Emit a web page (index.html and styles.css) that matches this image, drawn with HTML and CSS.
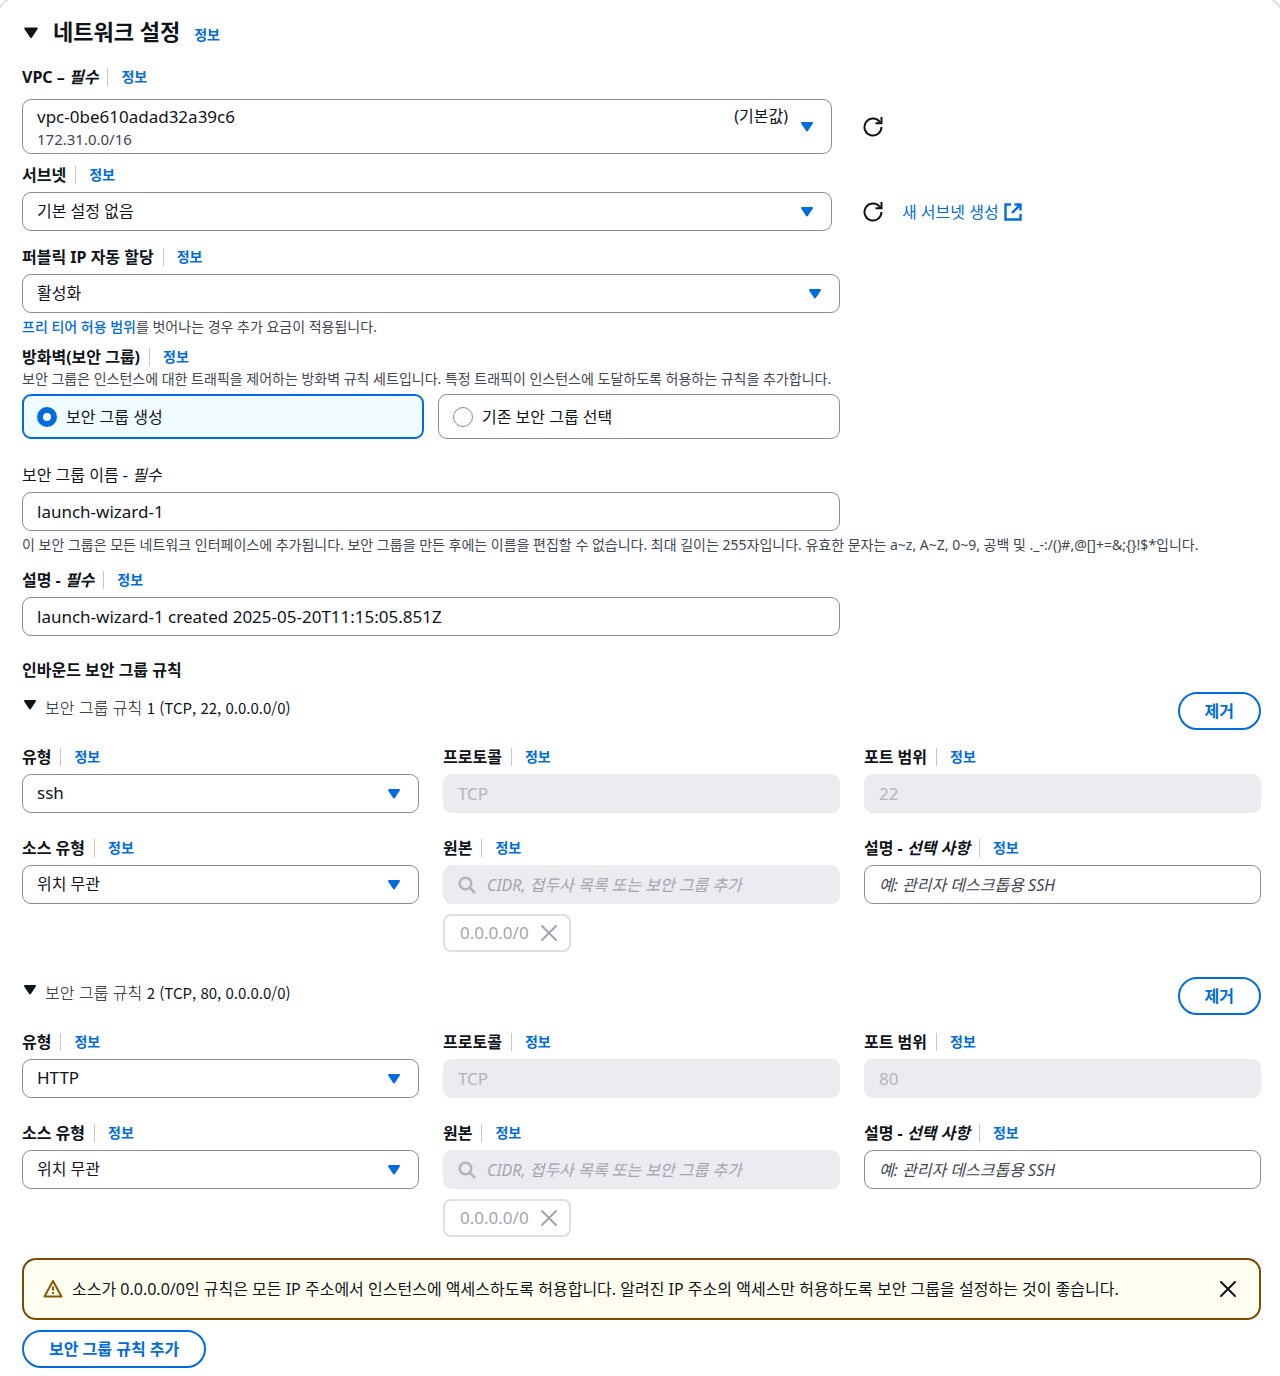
FILE: index.html
```html
<!DOCTYPE html>
<html lang="ko">
  <head>
    <meta charset="UTF-8" />
    <meta name="viewport" content="width=device-width, initial-scale=1.0" />
    <title>네트워크 설정</title>
    <link rel="stylesheet" href="styles.css">
  </head>
  <body>
    <!-- Shared icons -->
    <svg class="icon-defs" width="0" height="0" aria-hidden="true">
      <symbol id="caret" viewBox="0 0 16 16">
        <path d="M3 4h10L8 11.500z" fill="currentColor" stroke="currentColor" stroke-width="2" stroke-linejoin="round" />
      </symbol>
      <symbol id="refresh" viewBox="0 0 20 20">
        <path d="M18.500 10a8.500 8.500 0 1 1-2.200-5.700L17.800 6" fill="none" stroke="currentColor" stroke-width="2" />
        <path d="M18.500 0V6.200H12.500" fill="none" stroke="currentColor" stroke-width="2" />
      </symbol>
      <symbol id="external" viewBox="0 0 18 18">
        <path d="M7 1.500H1.500v15h15V11M10.500 1.500h6v6M16.500 1.500L8 10" fill="none" stroke="currentColor" stroke-width="2.400" />
      </symbol>
      <symbol id="search" viewBox="0 0 18 18">
        <circle cx="7.500" cy="7.500" r="5.800" fill="none" stroke="currentColor" stroke-width="2.500" />
        <path d="M11.500 11.500l5.500 5.500" fill="none" stroke="currentColor" stroke-width="2.500" />
      </symbol>
      <symbol id="close" viewBox="0 0 16 16">
        <path d="M1 1l14 14M15 1L1 15" fill="none" stroke="currentColor" stroke-width="2" stroke-linecap="round" />
      </symbol>
      <symbol id="warning" viewBox="0 0 20 20">
        <path d="M10 2L18.500 17.500H1.500z" fill="none" stroke="currentColor" stroke-width="2" stroke-linejoin="round" />
        <path d="M10 7.500v4M10 13v2" stroke="currentColor" stroke-width="2" />
      </symbol>
    </svg>

    <main class="panel">
      <header class="panel-header">
        <svg class="caret-title"><use href="#caret" /></svg>
        <h2>네트워크 설정</h2>
        <a class="info" href="#">정보</a>
      </header>

      <section class="field vpc">
        <div class="field-label">
          <label for="vpc">VPC – <em>필수</em></label>
          <a class="info divided" href="#">정보</a>
        </div>
        <div class="row">
          <div class="select select-tall">
            <select class="latin" id="vpc">
              <option>vpc-0be610adad32a39c6</option>
            </select>
            <span class="option-detail">172.31.0.0/16</span>
            <span class="option-tag">(기본값)</span>
            <svg class="caret"><use href="#caret" /></svg>
          </div>
          <button class="icon-button" type="button" aria-label="VPC 새로 고침">
            <svg class="icon-refresh"><use href="#refresh" /></svg>
          </button>
        </div>
      </section>

      <section class="field subnet">
        <div class="field-label">
          <label for="subnet">서브넷</label>
          <a class="info divided" href="#">정보</a>
        </div>
        <div class="row">
          <div class="select">
            <select id="subnet">
              <option>기본 설정 없음</option>
            </select>
            <svg class="caret"><use href="#caret" /></svg>
          </div>
          <button class="icon-button" type="button" aria-label="서브넷 새로 고침">
            <svg class="icon-refresh"><use href="#refresh" /></svg>
          </button>
          <a class="external-link" href="#">새 서브넷 생성 <svg class="icon-external"><use href="#external" /></svg></a>
        </div>
      </section>

      <section class="field public-ip">
        <div class="field-label">
          <label for="public-ip">퍼블릭 IP 자동 할당</label>
          <a class="info divided" href="#">정보</a>
        </div>
        <div class="select narrow">
          <select id="public-ip">
            <option>활성화</option>
          </select>
          <svg class="caret"><use href="#caret" /></svg>
        </div>
        <p class="hint"><a href="#">프리 티어 허용 범위</a>를 벗어나는 경우 추가 요금이 적용됩니다.</p>
      </section>

      <section class="firewall">
        <div class="field-label">
          <span id="firewall-label">방화벽(보안 그룹)</span>
          <a class="info divided" href="#">정보</a>
        </div>
        <p class="hint">보안 그룹은 인스턴스에 대한 트래픽을 제어하는 방화벽 규칙 세트입니다. 특정 트래픽이 인스턴스에 도달하도록 허용하는 규칙을 추가합니다.</p>
        <div class="tiles narrow" role="radiogroup" aria-labelledby="firewall-label">
          <label class="tile selected"><input type="radio" name="firewall" checked />보안 그룹 생성</label>
          <label class="tile"><input type="radio" name="firewall" />기존 보안 그룹 선택</label>
        </div>
      </section>

      <section class="field group-name">
        <div class="field-label regular">
          <label for="group-name">보안 그룹 이름 - <em>필수</em></label>
        </div>
        <input class="text-input narrow latin" id="group-name" type="text" value="launch-wizard-1" />
        <p class="hint">이 보안 그룹은 모든 네트워크 인터페이스에 추가됩니다. 보안 그룹을 만든 후에는 이름을 편집할 수 없습니다. 최대 길이는 255자입니다. 유효한 문자는 a~z, A~Z, 0~9, 공백 및 ._-:/()#,@[]+=&amp;;{}!$*입니다.</p>
      </section>

      <section class="field description">
        <div class="field-label">
          <label for="description">설명 - <em>필수</em></label>
          <a class="info divided" href="#">정보</a>
        </div>
        <input class="text-input narrow latin" id="description" type="text" value="launch-wizard-1 created 2025-05-20T11:15:05.851Z" />
      </section>

      <h3>인바운드 보안 그룹 규칙</h3>

      <section class="rule">
        <header class="rule-header">
          <svg class="caret-rule"><use href="#caret" /></svg>
          <h4>보안 그룹 규칙 <span>1 (TCP, 22, 0.0.0.0/0)</span></h4>
          <button class="button" type="button">제거</button>
        </header>
        <div class="rule-grid">
          <div class="field">
            <div class="field-label">
              <label for="type-1">유형</label>
              <a class="info divided" href="#">정보</a>
            </div>
            <div class="select">
              <select class="latin" id="type-1">
                <option>ssh</option>
              </select>
              <svg class="caret"><use href="#caret" /></svg>
            </div>
          </div>
          <div class="field">
            <div class="field-label">
              <label for="protocol-1">프로토콜</label>
              <a class="info divided" href="#">정보</a>
            </div>
            <input class="text-input latin" id="protocol-1" type="text" value="TCP" disabled />
          </div>
          <div class="field">
            <div class="field-label">
              <label for="port-1">포트 범위</label>
              <a class="info divided" href="#">정보</a>
            </div>
            <input class="text-input latin" id="port-1" type="text" value="22" disabled />
          </div>
          <div class="field">
            <div class="field-label">
              <label for="source-type-1">소스 유형</label>
              <a class="info divided" href="#">정보</a>
            </div>
            <div class="select">
              <select id="source-type-1">
                <option>위치 무관</option>
              </select>
              <svg class="caret"><use href="#caret" /></svg>
            </div>
          </div>
          <div class="field">
            <div class="field-label">
              <label for="source-1">원본</label>
              <a class="info divided" href="#">정보</a>
            </div>
            <div class="search">
              <input class="text-input" id="source-1" type="text" placeholder="CIDR, 접두사 목록 또는 보안 그룹 추가" disabled />
              <svg class="icon-search"><use href="#search" /></svg>
            </div>
            <div class="token">
              0.0.0.0/0
              <button type="button" aria-label="0.0.0.0/0 제거" disabled><svg class="icon-close"><use href="#close" /></svg></button>
            </div>
          </div>
          <div class="field">
            <div class="field-label">
              <label for="rule-description-1">설명 - <em>선택 사항</em></label>
              <a class="info divided" href="#">정보</a>
            </div>
            <input class="text-input" id="rule-description-1" type="text" placeholder="예: 관리자 데스크톱용 SSH" />
          </div>
        </div>
      </section>

      <section class="rule">
        <header class="rule-header">
          <svg class="caret-rule"><use href="#caret" /></svg>
          <h4>보안 그룹 규칙 <span>2 (TCP, 80, 0.0.0.0/0)</span></h4>
          <button class="button" type="button">제거</button>
        </header>
        <div class="rule-grid">
          <div class="field">
            <div class="field-label">
              <label for="type-2">유형</label>
              <a class="info divided" href="#">정보</a>
            </div>
            <div class="select">
              <select class="latin" id="type-2">
                <option>HTTP</option>
              </select>
              <svg class="caret"><use href="#caret" /></svg>
            </div>
          </div>
          <div class="field">
            <div class="field-label">
              <label for="protocol-2">프로토콜</label>
              <a class="info divided" href="#">정보</a>
            </div>
            <input class="text-input latin" id="protocol-2" type="text" value="TCP" disabled />
          </div>
          <div class="field">
            <div class="field-label">
              <label for="port-2">포트 범위</label>
              <a class="info divided" href="#">정보</a>
            </div>
            <input class="text-input latin" id="port-2" type="text" value="80" disabled />
          </div>
          <div class="field">
            <div class="field-label">
              <label for="source-type-2">소스 유형</label>
              <a class="info divided" href="#">정보</a>
            </div>
            <div class="select">
              <select id="source-type-2">
                <option>위치 무관</option>
              </select>
              <svg class="caret"><use href="#caret" /></svg>
            </div>
          </div>
          <div class="field">
            <div class="field-label">
              <label for="source-2">원본</label>
              <a class="info divided" href="#">정보</a>
            </div>
            <div class="search">
              <input class="text-input" id="source-2" type="text" placeholder="CIDR, 접두사 목록 또는 보안 그룹 추가" disabled />
              <svg class="icon-search"><use href="#search" /></svg>
            </div>
            <div class="token">
              0.0.0.0/0
              <button type="button" aria-label="0.0.0.0/0 제거" disabled><svg class="icon-close"><use href="#close" /></svg></button>
            </div>
          </div>
          <div class="field">
            <div class="field-label">
              <label for="rule-description-2">설명 - <em>선택 사항</em></label>
              <a class="info divided" href="#">정보</a>
            </div>
            <input class="text-input" id="rule-description-2" type="text" placeholder="예: 관리자 데스크톱용 SSH" />
          </div>
        </div>
      </section>

      <div class="alert" role="alert">
        <svg class="icon-warning"><use href="#warning" /></svg>
        <p>소스가 0.0.0.0/0인 규칙은 모든 IP 주소에서 인스턴스에 액세스하도록 허용합니다. 알려진 IP 주소의 액세스만 허용하도록 보안 그룹을 설정하는 것이 좋습니다.</p>
        <button class="icon-button" type="button" aria-label="닫기"><svg class="icon-close"><use href="#close" /></svg></button>
      </div>

      <button class="button" type="button">보안 그룹 규칙 추가</button>
    </main>
  </body>
</html>
```
FILE: styles.css
```css
* {
  box-sizing: border-box;
}

body {
  margin: 0;
  overflow-x: clip;
  background-color: #fff;
  color: #0f141a;
  font-family: "Noto Sans", "Noto Sans CJK KR", sans-serif;
  font-size: 16px;
  line-height: 24px;
}

h2,
h3,
h4,
p {
  margin: 0;
}

a {
  color: #006ce0;
  text-decoration: none;
}

button,
input,
select {
  font: inherit;
  color: inherit;
}

svg {
  flex: none;
  display: block;
}

.icon-defs {
  display: none;
}

/* The panel bleeds past the window edges */
.panel {
  margin: -2px -2px 0;
  padding: 18px 20px 8px 23px;
  border: 1px solid #c6c6cd;
  border-bottom: none;
  border-radius: 16px 16px 0 0;
}

.panel-header {
  display: flex;
  align-items: center;
  height: 32px;
}

.panel-header h2 {
  margin: 0 14px 4px 13px;
  font-size: 22px;
  line-height: 28px;
  font-weight: 700;
}

.panel-header .info {
  margin-top: 4px;
}

.caret-title {
  width: 18px;
  height: 18px;
}

/* Labels */
.field-label {
  display: flex;
  align-items: center;
  height: 24px;
  margin-bottom: 5px;
  font-weight: 700;
}

.field-label.regular {
  font-weight: 400;
}

.info {
  font-size: 14px;
  line-height: 18px;
  font-weight: 700;
}

.divided {
  margin-left: 9px;
  padding-left: 13px;
  border-left: 1px solid #c6c6cd;
}

.hint {
  font-size: 14px;
  line-height: 20px;
  color: #424650;
}

.hint a {
  font-weight: 500;
}

/* Form controls */
.narrow {
  width: calc(66.666% - 8px);
}

.row {
  display: flex;
  align-items: center;
}

.row .select {
  width: calc(66.666% - 16px);
  margin-right: 31px;
}

.select,
.search {
  display: grid;
  align-items: center;
}

.select > *,
.search > * {
  grid-area: 1 / 1;
}

.select select,
.text-input {
  display: block;
  width: 100%;
  height: 39px;
  padding: 0 14px;
  border: 1px solid #8c8c94;
  border-radius: 9px;
  background-color: #fff;
  appearance: none;
}

.select select {
  padding-bottom: 2px;
}

.text-input.narrow {
  width: calc(66.666% - 8px);
}

.select-tall select {
  height: 55px;
  padding-bottom: 20px;
}

.latin {
  font-size: 17px;
}

.option-detail {
  align-self: end;
  padding: 0 0 5px 15px;
  font-size: 15px;
  line-height: 20px;
  color: #424650;
  pointer-events: none;
}

.option-tag {
  align-self: start;
  justify-self: end;
  padding: 5px 44px 0 0;
  pointer-events: none;
}

.caret {
  justify-self: end;
  width: 16px;
  height: 16px;
  margin-right: 17px;
  color: #006ce0;
  pointer-events: none;
}

.text-input::placeholder {
  color: #424650;
  font-style: italic;
  opacity: 1;
}

.text-input:disabled {
  border-color: #ebebf0;
  background-color: #ebebf0;
  color: #b4b4bb;
}

.text-input:disabled::placeholder {
  color: #a4a4ad;
}

.search .text-input {
  padding-left: 43px;
}

.icon-search {
  width: 18px;
  height: 18px;
  margin-left: 15px;
  color: #b4b4bb;
}

.icon-button {
  padding: 0;
  border: none;
  background: none;
  cursor: pointer;
}

.icon-refresh {
  width: 20px;
  height: 20px;
}

.icon-external {
  width: 18px;
  height: 18px;
}

.icon-close {
  width: 16px;
  height: 16px;
}

.external-link {
  display: flex;
  align-items: center;
  gap: 5px;
  margin-left: 19px;
}

/* Sections */
.vpc {
  margin-top: 16px;
}

.vpc .field-label {
  margin-bottom: 10px;
}

.subnet {
  margin-top: 9px;
}

.public-ip {
  margin-top: 14px;
}

.field .hint {
  margin-top: 4px;
}

.firewall {
  margin-top: 8px;
}

.firewall .field-label {
  margin-bottom: 0;
}

.tiles {
  display: grid;
  grid-template-columns: 1fr 1fr;
  gap: 14px;
  margin-top: 5px;
}

.tile {
  display: flex;
  align-items: center;
  gap: 9px;
  height: 45px;
  padding: 0 14px;
  border: 1px solid #8c8c94;
  border-radius: 9px;
}

.tile.selected {
  padding: 0 13px;
  border: 2px solid #006ce0;
  background-color: #f0fbff;
}

.tile input {
  width: 20px;
  height: 20px;
  margin: 0;
  border: 1px solid #8c8c94;
  border-radius: 50%;
  background-color: #fff;
  appearance: none;
}

.tile input:checked {
  border: 6px solid #006ce0;
}

.group-name {
  margin-top: 24px;
}

.description {
  margin-top: 13px;
}

h3 {
  margin-top: 22px;
  font-size: 16px;
  font-weight: 700;
}

/* Rules */
.rule {
  margin-top: 9px;
}

.rule + .rule {
  margin-top: 24px;
}

.rule-header {
  display: flex;
  align-items: center;
  height: 39px;
}

.rule-header h4 {
  flex: 1;
  margin: 0 0 6px 7px;
  font-family: "Noto Sans CJK KR", sans-serif;
  font-size: 16px;
  font-weight: 300;
}

.rule-header h4 span {
  font-size: 15px;
  font-weight: 400;
}

.caret-rule {
  width: 16px;
  height: 16px;
  margin-bottom: 12px;
}

.rule-grid {
  display: grid;
  grid-template-columns: repeat(3, 1fr);
  gap: 23px 24px;
  margin-top: 15px;
}

.token {
  display: flex;
  align-items: center;
  gap: 12px;
  width: fit-content;
  height: 38px;
  margin-top: 10px;
  padding: 0 12px 0 15px;
  border: 2px solid #dedee3;
  border-radius: 8px;
  color: #a4a4ad;
  font-size: 17px;
}

.token button {
  padding: 0;
  border: none;
  background: none;
}

.button {
  height: 38px;
  padding: 0 25px;
  border: 2px solid #006ce0;
  border-radius: 20px;
  background-color: #fff;
  color: #006ce0;
  font-weight: 700;
  cursor: pointer;
}

.alert {
  display: flex;
  align-items: center;
  gap: 9px;
  height: 62px;
  margin: 21px 0 10px;
  padding: 0 23px 0 19px;
  border: 2px solid #7a4b00;
  border-radius: 14px;
  background-color: #fffef0;
}

.alert p {
  flex: 1;
}

.icon-warning {
  width: 20px;
  height: 20px;
  color: #855900;
}
```
